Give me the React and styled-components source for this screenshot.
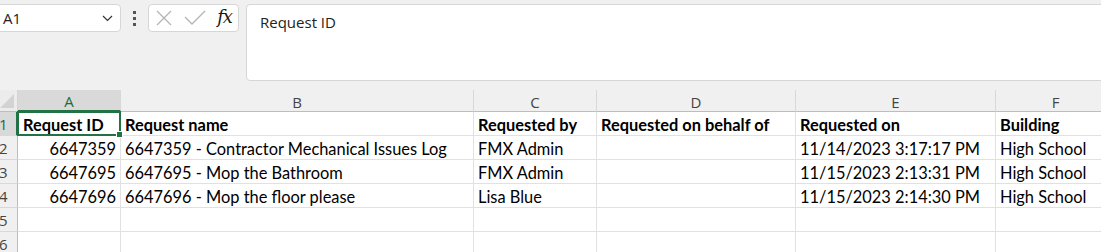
import React from 'react';
import styled, {createGlobalStyle, css} from 'styled-components';

const GlobalStyle = createGlobalStyle`
    html, body {
        margin:0;
        padding:0;
        background:#f0f0f0;
        overflow:hidden;
    }
`

const Page = styled.div`
    width:1101px;
    height:252px;
    overflow:hidden;
    background:#f0f0f0;
`

const FormulaBar = styled.div`
    display:flex;
    align-items:flex-start;
    height:90px;
    padding-top:4px;
    box-sizing:border-box;
    margin-left:-20px;
    width:1140px;
`

const Box = styled.div`
    display:flex;
    align-items:center;
    box-sizing:border-box;
    background:#fff;
    border:1px solid #d6d6d6;
    border-radius:4px;
    height:28px;
`

const NameBox = styled(Box)`
    width:141px;
    padding:0 7px 0 22px;
    justify-content:space-between;
    font-family:"Open Sans", "Liberation Sans", sans-serif;
    font-size:15px;
    color:#222;
`

const Dots = styled.div`
    width:27px;
    height:28px;
    display:flex;
    flex-direction:column;
    align-items:center;
    justify-content:center;
    gap:3px;

    span{
        width:3px;
        height:3px;
        background:#555;
    }
`

const FnBox = styled(Box)`
    width:91px;
    padding:0 6px;
    justify-content:space-between;
`

const Fx = styled.span`
    font-family:"DejaVu Serif", "Liberation Serif", serif;
    font-style:italic;
    font-size:18px;
    color:#1a1a1a;
    margin-top:-3px;
    letter-spacing:-1px;
`

const FormulaInput = styled(Box)`
    margin-left:7px;
    flex:1;
    height:77px;
    align-items:flex-start;
    padding:7px 13px;
    font-family:"Open Sans", "Liberation Sans", sans-serif;
    font-size:15px;
    color:#222;
`

const Grid = styled.div`
    display:grid;
    grid-template-columns:30px 103px 353px 123px 199px 200px 120px;
    grid-auto-rows:24px;
    grid-template-rows:22px;
    margin-left:-12px;
    background:#fff;
    font-family:Lato, "Liberation Sans", sans-serif;
    font-size:16.4px;
    color:#000;
`

const Corner = styled.div`
    background:#ececec;
    border-bottom:1px solid #bdbdbd;
    border-right:1px solid #d4d4d4;
    position:relative;
    box-sizing:border-box;

    &::after{
        content:"";
        position:absolute;
        right:3px;
        bottom:3px;
        border-style:solid;
        border-width:0 0 14px 14px;
        border-color:transparent transparent #d3d3d3 transparent;
    }
`

const ColHead = styled.div`
    background:${p => p.$active ? '#d9d9d9' : '#f0f0f0'};
    border-right:1px solid #d8d8d8;
    border-bottom:${p => p.$active ? '2px solid #217346' : '1px solid #bdbdbd'};
    box-sizing:border-box;
    display:flex;
    align-items:center;
    justify-content:center;
    padding-top:2px;
    font-family:"Open Sans", "Liberation Sans", sans-serif;
    font-size:15px;
    color:${p => p.$active ? '#1d6b40' : '#444'};
`

const RowHead = styled.div`
    background:${p => p.$active ? '#d9d9d9' : '#f0f0f0'};
    border-right:${p => p.$active ? '2px solid #217346' : '1px solid #bdbdbd'};
    border-bottom:1px solid #d8d8d8;
    box-sizing:border-box;
    display:flex;
    align-items:center;
    padding-left:11px;
    font-family:"Open Sans", "Liberation Sans", sans-serif;
    font-size:15px;
    color:${p => p.$active ? '#1d6b40' : '#444'};
`

const Cell = styled.div`
    border-right:1px solid #e1e1e1;
    border-bottom:1px solid #e1e1e1;
    box-sizing:border-box;
    display:flex;
    align-items:flex-end;
    padding:0 4px 1px;
    white-space:nowrap;
    overflow:visible;
    ${p => p.$bold && css`font-weight:bold;`}
    ${p => p.$right && css`justify-content:flex-end;`}
    ${p => p.$selected && css`
        position:relative;
        z-index:1;
        border:2px solid #217346;
        margin:-1px 0 0 -1px;
        padding:0 3px 0 4px;

        &::after{
            content:"";
            position:absolute;
            right:-4px;
            bottom:-4px;
            width:5px;
            height:5px;
            background:#217346;
            border:1px solid #fff;
        }
    `}
`

const columns = ['A', 'B', 'C', 'D', 'E', 'F'];

const rows = [
    ['6647359', '6647359 - Contractor Mechanical Issues Log', 'FMX Admin', '', '11/14/2023 3:17:17 PM', 'High School'],
    ['6647695', '6647695 - Mop the Bathroom', 'FMX Admin', '', '11/15/2023 2:13:31 PM', 'High School'],
    ['6647696', '6647696 - Mop the floor please', 'Lisa Blue', '', '11/15/2023 2:14:30 PM', 'High School'],
    ['', '', '', '', '', ''],
    ['', '', '', '', '', ''],
];

const headers = ['Request ID', 'Request name', 'Requested by', 'Requested on behalf of', 'Requested on', 'Building'];

const Chevron = () => (
    <svg width="11" height="7" viewBox="0 0 11 7">
        <path d="M1 1 L5.5 5.5 L10 1" fill="none" stroke="#333" strokeWidth="1.2"/>
    </svg>
)

const Cross = () => (
    <svg width="18" height="18" viewBox="0 0 18 18">
        <path d="M2 2 L16 16 M16 2 L2 16" stroke="#b4b4b4" strokeWidth="1.3" fill="none"/>
    </svg>
)

const Check = () => (
    <svg width="22" height="18" viewBox="0 0 22 18">
        <path d="M1 8 L8 15 L21 2" stroke="#b4b4b4" strokeWidth="1.3" fill="none"/>
    </svg>
)

const App = () => {
    return (
        <Page>
            <GlobalStyle/>
            <FormulaBar>
                <NameBox>
                    <span>A1</span>
                    <Chevron/>
                </NameBox>
                <Dots><span/><span/><span/></Dots>
                <FnBox>
                    <Cross/>
                    <Check/>
                    <Fx>fx</Fx>
                </FnBox>
                <FormulaInput>Request ID</FormulaInput>
            </FormulaBar>
            <Grid>
                <Corner/>
                {columns.map(c => (
                    <ColHead key={c} $active={c === 'A'}>{c}</ColHead>
                ))}
                <RowHead $active>1</RowHead>
                {headers.map((h, i) => (
                    <Cell key={h} $bold $selected={i === 0}>{h}</Cell>
                ))}
                {rows.map((r, ri) => (
                    <React.Fragment key={ri}>
                        <RowHead>{ri + 2}</RowHead>
                        {r.map((v, ci) => (
                            <Cell key={ci} $right={ci === 0}>{v}</Cell>
                        ))}
                    </React.Fragment>
                ))}
            </Grid>
        </Page>
    )
}

export default App;
